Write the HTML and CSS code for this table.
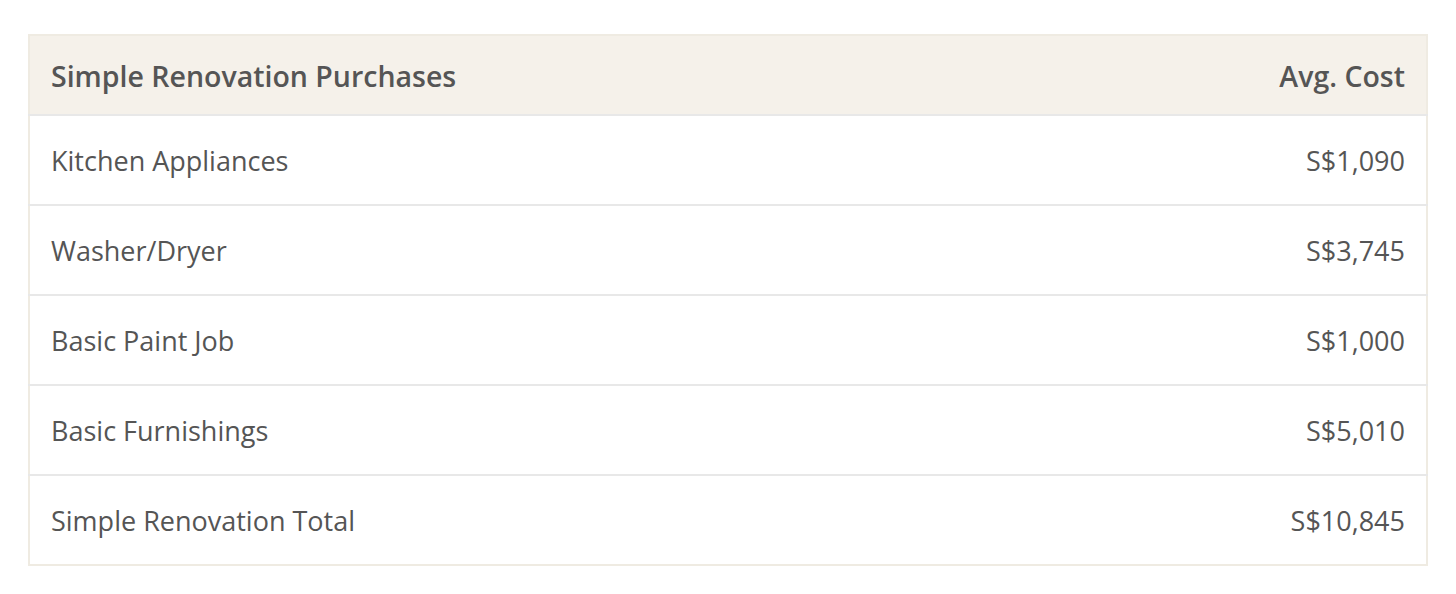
FILE: index.html
```html
<!DOCTYPE html>
<html>
<head>
<meta charset="utf-8">
<link rel="stylesheet" href="styles.css">
</head>
<body>
<div class="page">
<table class="cost-table">
  <thead>
    <tr><th class="label">Simple Renovation Purchases</th><th class="value">Avg. Cost</th></tr>
  </thead>
  <tbody>
    <tr><td class="label">Kitchen Appliances</td><td class="value">S$1,090</td></tr>
    <tr><td class="label">Washer/Dryer</td><td class="value">S$3,745</td></tr>
    <tr><td class="label">Basic Paint Job</td><td class="value">S$1,000</td></tr>
    <tr><td class="label">Basic Furnishings</td><td class="value">S$5,010</td></tr>
    <tr><td class="label">Simple Renovation Total</td><td class="value">S$10,845</td></tr>
  </tbody>
</table>
</div>
</body>
</html>
```
FILE: styles.css
```css
html, body {
  margin: 0;
  padding: 0;
  background: #ffffff;
}
.page {
  padding: 34px 28px;
}
.cost-table {
  width: 1400px;
  border-collapse: collapse;
  border: 2px solid #efebe2;
  font-family: "Open Sans", "Liberation Sans", sans-serif;
  color: #555555;
  font-size: 27px;
}
.cost-table th {
  background: #f5f1ea;
  height: 80px;
  padding: 2px 21px 0;
  font-size: 28.5px;
  font-weight: 600;
  box-sizing: border-box;
}
.cost-table td {
  height: 88px;
  padding: 0 21px;
  border-top: 2px solid #e8e8e8;
}
.label { text-align: left; }
.value { text-align: right; }
```
